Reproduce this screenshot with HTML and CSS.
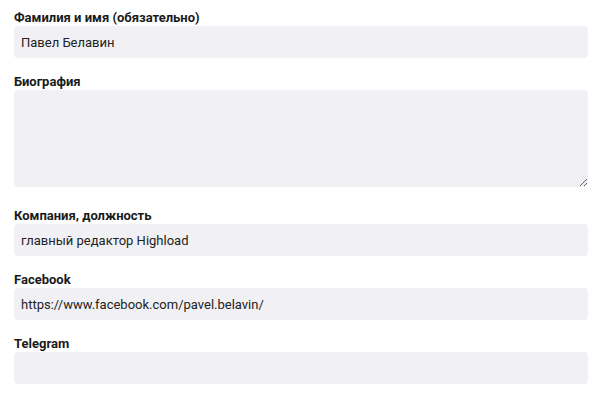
FILE: index.html
```html
<!DOCTYPE html>
<html lang="ru">
<head>
<meta charset="utf-8">
<link rel="stylesheet" href="styles.css">
</head>
<body>
<form class="form">
  <div class="field">
    <label class="label">Фамилия и имя (обязательно)</label>
    <input class="input" type="text" value="Павел Белавин">
  </div>
  <div class="field">
    <label class="label">Биография</label>
    <textarea class="input textarea"></textarea>
  </div>
  <div class="field">
    <label class="label">Компания, должность</label>
    <input class="input" type="text" value="главный редактор Highload">
  </div>
  <div class="field">
    <label class="label">Facebook</label>
    <input class="input" type="text" value="https://www.facebook.com/pavel.belavin/">
  </div>
  <div class="field">
    <label class="label">Telegram</label>
    <input class="input" type="text" value="">
  </div>
</form>
</body>
</html>
```
FILE: styles.css
```css
html, body {
  margin: 0;
  padding: 0;
  background: #ffffff;
}
body {
  font-family: Roboto, "Liberation Sans", sans-serif;
  color: #1b1b1b;
}
.form {
  display: flex;
  flex-direction: column;
  gap: 16px;
  padding: 10px 12px 0 14px;
}
.field {
  display: flex;
  flex-direction: column;
}
.label {
  font-weight: 700;
  font-size: 13px;
  line-height: 16px;
  color: #1a1a1a;
}
.input {
  box-sizing: border-box;
  display: block;
  width: 574px;
  height: 32px;
  margin: 0;
  padding: 0 7px;
  border: none;
  border-radius: 4px;
  background: #f1f1f5;
  font-family: Roboto, "Liberation Sans", sans-serif;
  font-size: 13px;
  color: #222222;
  outline: none;
}
.textarea {
  height: 97px;
  margin-bottom: 5px;
  padding: 7px;
  resize: vertical;
}
```
